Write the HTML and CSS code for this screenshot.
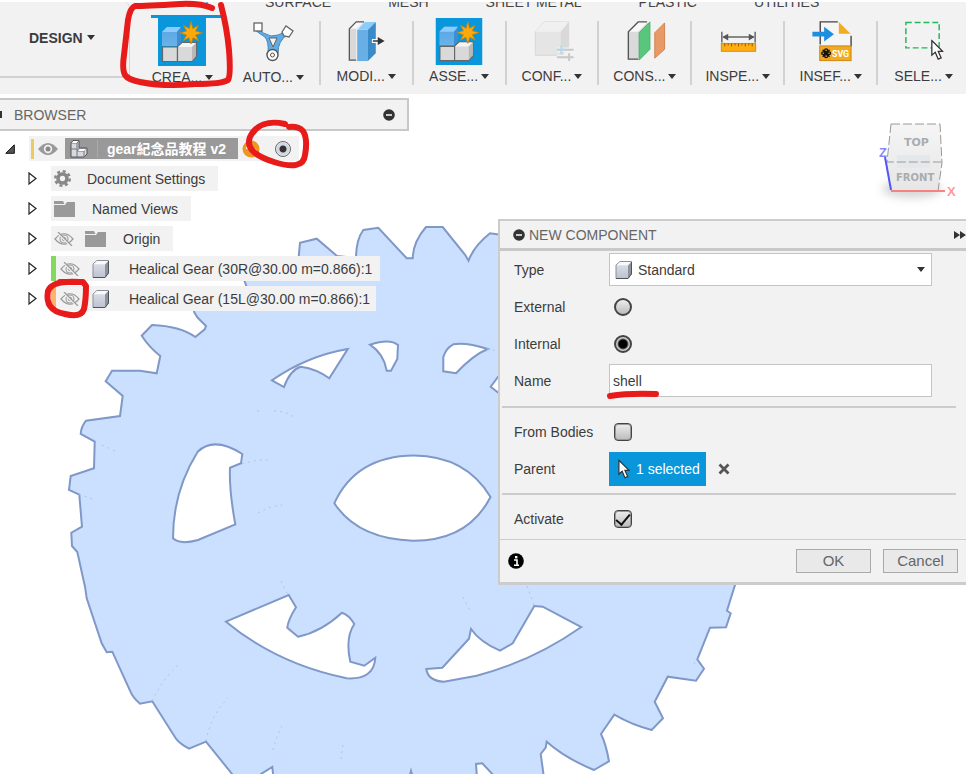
FILE: index.html
```html
<!DOCTYPE html>
<html lang="en">
<head>
<meta charset="utf-8">
<title>gear紀念品教程 v2</title>
<link rel="stylesheet" href="styles.css">
</head>
<body>
<svg class="defs" aria-hidden="true">
  <defs>
    <linearGradient id="boxFace" x1="0" y1="0" x2="0" y2="1"><stop offset="0" stop-color="#dfe3ec"/><stop offset="1" stop-color="#bcc2cf"/></linearGradient>
    <linearGradient id="blueFace" x1="0" y1="0" x2="0" y2="1"><stop offset="0" stop-color="#5aa5e2"/><stop offset="1" stop-color="#69b2ea"/></linearGradient>
    <linearGradient id="cubeFace" x1="0" y1="0" x2="0" y2="1"><stop offset="0" stop-color="#f5f5f5"/><stop offset="1" stop-color="#e6e6e6"/></linearGradient>
    <filter id="soft" x="-50%" y="-50%" width="200%" height="200%"><feGaussianBlur stdDeviation="4"/></filter>
    <symbol id="assemble" viewBox="0 0 48 48">
      <rect width="48" height="48" fill="#0a96da"/>
      <path d="M4 14L9 9H23L19 14V28H4Z" fill="url(#blueFace)"/>
      <path d="M4 14L9 9H23L19 14Z" fill="#8ccbff"/>
      <path d="M19 14L23 9V25L19 28Z" fill="#3f8ed0"/>
      <path d="M4.500 29H19.500V43.500H4.500Z" fill="#d9d9d9" stroke="#666" stroke-width="1.200"/>
      <path d="M19.500 29L24 24.500H38.500V38L34 43.500H19.500Z" fill="#d9d9d9" stroke="#666" stroke-width="1.200"/>
      <path d="M20 29L24.500 25H38L34 29Z" fill="#f5f5f5"/>
      <path d="M34 29L38 25V38L34 43Z" fill="#b8b8b8"/>
      <path d="M33 3.500L34.800 10.500L40.500 7.500L37.500 13L44.500 15L37.500 17L40.500 22.500L35 19.700L33 26L31 19.700L25.500 22.500L28.500 17L22 15L28.500 13L25.500 7.500L31.300 10.500Z" fill="#ffa80a" stroke="#c98200" stroke-width=".8"/>
    </symbol>
    <symbol id="box" viewBox="0 0 20 20">
      <path d="M2 5L6 1.500H17.500V14L14 18.500H2Z" fill="url(#boxFace)" stroke="#8a8f99"/>
      <path d="M2.500 5.200L6 2H17L14 5.200Z" fill="#f8fafc"/>
      <path d="M14 5.500L17.500 2V14L14 18.500Z" fill="#8d929c"/>
      <path d="M17.500 2V14L14 18.500H2" fill="none" stroke="#4f535a"/>
    </symbol>
    <symbol id="folder" viewBox="0 0 21 16">
      <path d="M0 0H9L10.500 3H0Z" fill="#999"/>
      <path d="M0 4H11L13 1H21V16H0Z" fill="#999"/>
    </symbol>
    <symbol id="hidden-eye" viewBox="0 0 20 14">
      <path d="M1 7Q10-3.500 19 7Q10 17.500 1 7Z" fill="none" stroke="#999" stroke-width="1.200"/>
      <circle cx="10" cy="7" r="4" fill="none" stroke="#999" stroke-width="1.100"/>
      <circle cx="10" cy="7" r="1.800" fill="none" stroke="#999"/>
      <path d="M3 0L17 14" stroke="#f2f2f2" stroke-width="2"/>
      <path d="M4 0L18 14" stroke="#999" stroke-width="1.200"/>
    </symbol>
    <symbol id="twisty" viewBox="0 0 9 13"><path d="M1 1L8 6.500L1 12Z" fill="#fff" stroke="#222" stroke-width="1.200"/></symbol>
    <symbol id="minus" viewBox="0 0 12 12"><circle cx="6" cy="6" r="5.800" fill="#333"/><path d="M3 6H9" stroke="#ddd" stroke-width="1.800"/></symbol>
    <symbol id="pointer" viewBox="0 0 13 21"><path d="M1 1V16L4.500 13L7.500 20L10.500 18.700L7.500 12H12Z" fill="#fff" stroke="#333" stroke-width="1.300"/></symbol>
  </defs>
</svg>

<div class="app">
  <svg class="canvas" aria-label="Gear body">
    <path class="body-face" d="M194 300L240 298L246.700 287L244.500 281L246 270L298.700 262V257L300 242.700L316.700 238.700L337 256L356 258Q356 240 363.300 230L378.300 227.700L406.700 258.300H412.700Q413 242 426 227H442.700L465.300 255L468.500 260.700Q474 246 490 233.300L510 236L742 560L735 585L727 610.700L730.700 613.300L726 627.300L710 627.700L697.300 659.300L704 668.700L696 680.700L667.700 676.700L654.700 701.700L663 718.300L651.700 730Q632 725 614.300 714.700L601 734Q606 744 609 761.300L594 770Q565 758 546.700 741.700L545.700 747.700L540.700 754L544 778H496L482.300 763.300L476 764L477 778H413L411 771L409 778H276L273 774L272.300 767L261 774L256 782H238L231.700 773.500L206 741.700L189 748.700Q180 744 176 738.700L152.300 701.300L140 703.700Q133 698 130 690.700L112.300 651.700L106.700 652.300L101.700 643.300L86.700 598.300L85 586.700L77.300 552L72 546L71.300 532.700L82 526.700L79.300 494.700L69 490L70.700 476L94 468.300L94.700 441.700L80.700 434Q81 427 86 420.700L120 416L122.700 396L105.700 381.300L112 370.700H140L156.700 373.300L160.300 356Q149 347 141.700 335.700L152 325Q180 326 195.300 337L204.700 329.300L206 326L197.300 317.300L194 311.700L194 300Z"/>
    <g class="body-hole">
      <path d="M272 380.300Q307 356 347.700 349L329.300 378.300Q317 369 300.700 366.700Q290 370 284 387Z"/>
      <path d="M370 344.700Q390 338 398 345L397.300 359L391 370.700H386.700Q384 354 370 344.700Z"/>
      <path d="M443.300 371.300V357Q446 348 453.300 344.300Q466 342 487.700 349Q473 355 456 373.300Z"/>
      <path d="M506 370L498 377L490.700 386.700L498.300 392.700L508 398Z"/>
      <path d="M173 538.300C173 510 180 480 197.700 451.700Q214 436 242.300 454L241 463.300L230 467.700Q229 490 235.300 524.300L198 540Q180 545 173 538.300Z"/>
      <path d="M334.300 503.300Q356 456 414 455.500Q466 456 490.500 497Q468 541 413 540.700Q358 539 334.300 503.300Z"/>
      <path d="M226 621.700L288.700 595L296 607.300Q288 620 287.300 627.700L298 636.700Q321 632 342 612.700Q349 615 354.300 624Q345 638 350.300 661.700L364.300 665.700L375.300 657.700Q374 680 346.700 678.300Q277 664 226 621.700Z"/>
      <path d="M426.300 669L442.300 667.700L469 638.700L471 629Q480 642 500 650.700L512.700 643.300L534.300 606L542.700 606.700L581.300 627Q533 661 476.700 675.700L444 681.700Q428 681 426.300 669Z"/>
    </g>
    <g class="hidden-edges">
      <path d="M152 701Q162 680 178 665M206 741Q211 715 228 698M273 750Q276 737 282 726M341 759L343 745M257 411H263M274 411Q286 411 295 418M242 464Q257 459 270 460M258 513Q270 506 283 505M463 597L471 613M527 586L534 605M79 494L95 500M102 445L115 451M487 349L500 351M281 581L288 595M694 664L697 658"/>
    </g>
  </svg>

  <header class="toolbar">
    <div class="workspace">
      <button class="workspace-button" type="button">DESIGN <span class="caret"></span></button>
    </div>
    <div class="ribbon">
      <nav class="tabs" aria-label="Toolbar tabs">
        <a class="tab active" href="#">SOLID</a><a class="tab" href="#">SURFACE</a><a class="tab" href="#">MESH</a><a class="tab" href="#">SHEET METAL</a><a class="tab" href="#">PLASTIC</a><a class="tab" href="#">UTILITIES</a>
      </nav>
      <div class="tools">
        <button class="tool" type="button"><svg viewBox="0 0 48 48"><use href="#assemble"/></svg><span class="tool-name">CREA...<i class="caret"></i></span></button>
        <button class="tool" type="button"><svg viewBox="0 0 48 48">
          <path d="M8 10Q14 16 22 18Q29 18 36 14L38 17Q29 23 29 35H19Q20 24 16 19Q11 16 6 12Z" fill="#63abe3" stroke="#4288bd"/>
          <path d="M20 20H28L24 29Z" fill="#f2f2f2" stroke="#58656e"/>
          <rect x="5" y="5" width="8" height="8" fill="#fff" stroke="#666" stroke-width="1.300"/>
          <path d="M33 14L37 8L44 13L40 19L35 18Z" fill="#fff" stroke="#666" stroke-width="1.300"/>
          <circle cx="23.500" cy="37" r="5.500" fill="#fff" stroke="#555" stroke-width="1.400"/><circle cx="23.500" cy="37" r="2" fill="none" stroke="#555"/></svg><span class="tool-name">AUTO...<i class="caret"></i></span></button>
        <button class="tool" type="button"><svg viewBox="0 0 48 48">
          <path d="M7 11L14 4H23L14 11V43H7Z" fill="#d9d9d9"/><path d="M7 11L14 4H22L14 11Z" fill="#f7f7f7"/><path d="M14 43H7V11L14 4H22" fill="none" stroke="#555" stroke-width="1.300"/>
          <path d="M15 12H26V44H15Z" fill="#68afe5"/><path d="M15 12L23 4H34L26 12Z" fill="#8cccfa"/><path d="M26 12L34 4V36L26 44Z" fill="#398cc8"/>
          <path d="M30 23.500H39" stroke="#fff" stroke-width="4"/><path d="M31 23.500H41" stroke="#333" stroke-width="1.500"/><path d="M36 19.500L43 23.500L36 27.500Z" fill="#333"/></svg><span class="tool-name">MODI...<i class="caret"></i></span></button>
        <button class="tool" type="button"><svg viewBox="0 0 48 48"><use href="#assemble"/></svg><span class="tool-name">ASSE...<i class="caret"></i></span></button>
        <button class="tool" type="button"><svg viewBox="0 0 48 48">
          <path d="M7 14L16 4H41V30L34 38H7Z" fill="#e5e5e5" stroke="#d6d6d6"/><path d="M7 14L16 4H41L33 14Z" fill="#f0f0f0"/><path d="M33 14L41 4V29L33 38Z" fill="#d9d9d9"/>
          <path d="M29 32.500H46M29 40H46" stroke="#f2f2f2" stroke-width="5"/><path d="M29 32.500H46M29 40H46M41.500 36V44" stroke="#c8c8c8" stroke-width="2"/><path d="M33.500 28V37M29 32.500H38" stroke="#b6d9ed" stroke-width="2"/></svg><span class="tool-name">CONF...<i class="caret"></i></span></button>
        <button class="tool" type="button"><svg viewBox="0 0 48 48">
          <path d="M7 14L17 4H27V34L17 43H7Z" fill="#dadada"/><path d="M7 14L17 4H27L17 14Z" fill="#f8f8f8"/><path d="M17 42H7V14L17 4H26" fill="none" stroke="#555" stroke-width="1.400"/>
          <path d="M18 15L29 4V32L18 43Z" fill="#58c67c" stroke="#4aaf6c"/><path d="M34 15L44 5V32L34 41Z" fill="#e79a67" stroke="#d28351"/></svg><span class="tool-name">CONS...<i class="caret"></i></span></button>
        <button class="tool" type="button"><svg viewBox="0 0 48 48">
          <path d="M7.500 14V25M41.500 14V25M9 19.500H40" stroke="#666" stroke-width="1.500"/><path d="M8 19.500L14 16V23ZM41 19.500L35 16V23Z" fill="#555"/>
          <rect x="7" y="26" width="35" height="8" fill="#ffad12" stroke="#db8b0b"/><path d="M10.500 26V29M14 26V28M17.500 26V29M21 26V28M24.500 26V29M28 26V28M31.500 26V29M35 26V28M38.500 26V29" stroke="#885900"/></svg><span class="tool-name">INSPE...<i class="caret"></i></span></button>
        <button class="tool" type="button"><svg viewBox="0 0 48 48">
          <path d="M13 29V4H32L44 16V29Z" fill="#f5f5f5"/><path d="M13 27V4H31M44.500 18V29" fill="none" stroke="#444" stroke-width="1.400"/><path d="M32 4V16H44Z" fill="#efad24"/>
          <path d="M5 14H17V9L27 16.500L17 24V19H5Z" fill="#1c90df"/>
          <rect x="12.500" y="28.500" width="32" height="15" fill="#f1ab22" stroke="#ce8610"/>
          <g fill="none" stroke="#111" stroke-width="1.300"><circle cx="19" cy="33" r="1.500"/><circle cx="19" cy="39" r="1.500"/><circle cx="16" cy="36" r="1.500"/><circle cx="22" cy="36" r="1.500"/><path d="M15.500 32.500L22.500 39.500M22.500 32.500L15.500 39.500"/></g>
          <text x="25" y="40" class="svg-label">SVG</text></svg><span class="tool-name">INSEF...<i class="caret"></i></span></button>
        <button class="tool" type="button"><svg viewBox="0 0 48 48">
          <rect x="5.500" y="4.500" width="34" height="26" fill="none" stroke="#25b55b" stroke-width="1.500" stroke-dasharray="6 3"/>
          <use href="#pointer" x="31" y="22" width="13" height="21"/></svg><span class="tool-name">SELE...<i class="caret"></i></span></button>
      </div>
    </div>
  </header>

  <main class="workspace-area">
    <section class="browser" aria-label="Browser">
      <div class="browser-head"><i class="grip"></i><h2>BROWSER</h2><svg class="minus"><use href="#minus"/></svg></div>
      <ul class="tree">
        <li class="row root">
          <svg class="open-twisty" viewBox="0 0 10 10"><path d="M9.300 .8V9.300H.8Z" fill="#555" stroke="#111"/></svg>
          <div class="cell">
            <i class="mark yellow"></i>
            <svg class="eye" viewBox="0 0 20 14"><path d="M0 7Q10-5 20 7Q10 19 0 7Z" fill="#999"/><circle cx="10" cy="7" r="4.200" fill="#f2f2f2"/><circle cx="10" cy="7" r="2.500" fill="#888"/></svg>
            <span class="selected">
              <svg class="root-icon" viewBox="0 0 20 20"><path d="M2 4L4 1.500H10V9H18L18 15L15 18H2Z" fill="#d5d9e2" stroke="#555"/><path d="M2 10H8V18M8 12L10.500 9H18L15 12H8M15 12V18M2 4H8L10 2M8 4V10" fill="none" stroke="#777"/><path d="M3 4L4.500 2H9L7.500 4ZM9 12L11 10H17L15 12Z" fill="#fff"/></svg>
              <b>gear紀念品教程 v2</b>
            </span>
            <svg class="sync" viewBox="0 0 18 18"><circle cx="9" cy="9" r="8.500" fill="#ee9620"/><path d="M5 9Q5 5 9 5M9 12H16M13 9L16 15" fill="none" stroke="#fff" stroke-width="1.800"/><path d="M12 15Q15 11 17 16" fill="none" stroke="#333" stroke-width="1.500"/></svg>
            <input class="activate-dot" type="radio" name="active-component" aria-label="Activate component" checked>
          </div>
        </li>
        <li class="row"><svg class="twisty"><use href="#twisty"/></svg><div class="cell"><svg class="gear" viewBox="0 0 16 16"><circle cx="8" cy="8" r="6.800" fill="none" stroke="#888" stroke-width="2.400" stroke-dasharray="2.800 2.540"/><circle cx="8" cy="8" r="4.200" fill="none" stroke="#888" stroke-width="3.400"/></svg><span class="after-gear">Document Settings</span></div></li>
        <li class="row"><svg class="twisty"><use href="#twisty"/></svg><div class="cell"><svg class="folder"><use href="#folder"/></svg><span class="after-folder">Named Views</span></div></li>
        <li class="row"><svg class="twisty"><use href="#twisty"/></svg><div class="cell"><svg class="eye"><use href="#hidden-eye"/></svg><svg class="folder second"><use href="#folder"/></svg><span class="after-folder">Origin</span></div></li>
        <li class="row"><svg class="twisty"><use href="#twisty"/></svg><div class="cell component"><i class="mark green"></i><svg class="eye"><use href="#hidden-eye"/></svg><svg class="box"><use href="#box"/></svg><span class="after-box">Healical Gear (30R@30.00 m=0.866):1</span></div></li>
        <li class="row"><svg class="twisty"><use href="#twisty"/></svg><div class="cell component"><i class="mark orange"></i><svg class="eye"><use href="#hidden-eye"/></svg><svg class="box"><use href="#box"/></svg><span class="after-box">Healical Gear (15L@30.00 m=0.866):1</span></div></li>
      </ul>
    </section>

    <form class="dialog" aria-label="New component">
      <div class="dialog-head"><svg class="minus"><use href="#minus"/></svg><h2>NEW COMPONENT</h2><svg class="forward" viewBox="0 0 12 8"><path d="M0 0L6 4L0 8ZM6 0L12 4L6 8Z" fill="#333"/></svg></div>
      <div class="section first">
        <div class="field"><label for="type">Type</label><span class="select-wrap"><svg class="box"><use href="#box"/></svg><select id="type"><option>Standard</option></select><i class="caret"></i></span></div>
        <div class="field"><label for="external">External</label><input id="external" type="radio" name="place"></div>
        <div class="field"><label for="internal">Internal</label><input id="internal" type="radio" name="place" checked></div>
        <div class="field"><label for="name">Name</label><input id="name" type="text" value="shell"></div>
      </div>
      <div class="section">
        <div class="field"><label for="bodies">From Bodies</label><input id="bodies" type="checkbox"></div>
        <div class="field"><label for="parent">Parent</label><button id="parent" class="picker" type="button"><svg viewBox="0 0 13 21"><use href="#pointer"/></svg>1 selected</button><button class="clear" type="button" aria-label="Clear selection"><svg viewBox="0 0 12 12"><path d="M1.500 1.500L10.500 10.500M10.500 1.500L1.500 10.500" stroke="#555" stroke-width="2.800"/></svg></button></div>
      </div>
      <div class="section last">
        <div class="field"><label for="activate">Activate</label><input id="activate" type="checkbox" checked></div>
      </div>
      <div class="dialog-foot">
        <svg class="info" viewBox="0 0 16 16"><circle cx="8" cy="8" r="7.800" fill="#000"/><path d="M6 7H9V12M6 12.300H11" fill="none" stroke="#fff" stroke-width="1.600"/><rect x="7" y="3" width="2.400" height="2.400" fill="#fff"/></svg>
        <button type="button">OK</button><button type="button">Cancel</button>
      </div>
    </form>
  </main>

  <svg class="view-cube" viewBox="870 110 96 100" aria-label="View cube">
    <ellipse cx="912" cy="189" rx="30" ry="9" fill="#bbb" opacity=".6" filter="url(#soft)"/>
    <path d="M891 124L940 124L942 163L938 191H890L887 162Z" fill="url(#cubeFace)"/>
    <path d="M897 155H930V168H897Z" fill="#e5e8ea"/>
    <path d="M891 124L940 124L942 163L938 191M891 124L887 162H942" fill="none" stroke="#999" stroke-dasharray="9 3"/>
    <text x="904" y="146" class="cube-text">TOP</text>
    <text x="896" y="181" class="cube-text front">FRONT</text>
    <path d="M885 157L891 190" stroke="#5555f5" stroke-width="2"/><path d="M891 191H945" stroke="#f78282" stroke-width="2"/>
    <text x="879" y="157" class="axis z">Z</text><text x="947" y="196" class="axis x">X</text>
  </svg>

  <svg class="markup" aria-hidden="true">
    <path d="M212 8Q200 3 180 4Q145 6 135 6Q130 8 128 20L124 55C121 76 125 79 140 82Q165 87 195 84Q222 84 228 80Q231 76 229 50Q227 28 221 5"/>
    <path d="M285 124C268 120 256 125 250 137C245 150 259 157 274 162C293 168 304 166 305 155Q308 139 303 131Q298 126 289 127"/>
    <path d="M80 282Q52 280 48 291C46 302 49 311 65 314Q81 318 84 309Q86 300 86 286L83 282L60 282"/>
    <path d="M610 396Q628 393 656 394"/>
  </svg>
</div>
</body>
</html>
```
FILE: styles.css
```css
* { box-sizing: border-box; }
body { margin: 0; background: #fff; color: #3c3c3c; font: 14px/18px "Liberation Sans", "Noto Sans CJK TC", Arial, sans-serif; }
button, input, select { font: inherit; color: inherit; margin: 0; }
h2 { margin: 0; font-size: 14px; font-weight: 400; color: #666; }
.defs { position: absolute; width: 0; height: 0; }
.app { position: relative; min-height: 100vh; overflow: hidden; }
.canvas, .markup { position: absolute; top: 0; left: 0; width: 100%; height: 100%; }
.markup { pointer-events: none; fill: none; stroke: #e81b1b; stroke-width: 6; stroke-linecap: round; stroke-linejoin: round; }
.body-face { fill: #cbdfff; stroke: #7f98c8; stroke-width: 2; }
.body-hole { fill: #fff; stroke: #7f98c8; stroke-width: 2; }
.hidden-edges { fill: none; stroke: #b2c3e0; stroke-width: 1; stroke-dasharray: 2 4; }
.caret { display: inline-block; flex: none; border: 4px solid transparent; border-top: 5px solid #333; border-bottom: 0; }

.toolbar { position: relative; display: flex; height: 94px; border-top: 2px solid #fff; background: #f2f2f2; }
.workspace { flex: none; width: 130px; height: 76px; border: 2px solid #d2d2d2; border-width: 0 1px 2px 0; border-top-right-radius: 6px; display: flex; align-items: center; }
.workspace-button { border: 0; background: none; padding: 0 0 3px 29px; font-weight: 700; display: flex; align-items: center; gap: 4px; }
.ribbon { flex: 1; min-width: 0; padding-left: 7px; margin-right: -3px; }
.tabs { display: flex; height: 16px; padding-left: 14px; gap: 27px; overflow: hidden; align-items: flex-end; }
.tab { color: #444; text-decoration: none; white-space: nowrap; padding: 0 15px 4px; line-height: 18px; border-bottom: 3px solid transparent; }
.tab.active { color: #0a96da; border-color: #0a96da; }
.tools { display: flex; }
.tool { position: relative; flex: 1; min-width: 0; padding: 0; border: 0; background: none; display: flex; flex-direction: column; align-items: center; gap: 2px; }
.tool svg { width: 48px; height: 48px; }
.tool + .tool + .tool { border-left: 2px solid #d2d2d2; height: 64px; margin-top: 3px; }
.tool + .tool + .tool svg { margin-top: -3px; }
.tool-name { display: flex; align-items: center; gap: 3px; white-space: nowrap; }
.svg-label { font: 700 9px Roboto, sans-serif; fill: #fff; }

.workspace-area { position: relative; display: flex; justify-content: space-between; align-items: flex-start; }
.browser { width: 409px; padding-top: 4px; }
.browser-head { display: flex; align-items: center; height: 33px; border: 2px solid #c8c8c8; border-width: 2px 2px 2px 0; background: #f2f2f2; padding-right: 12px; }
.browser-head h2 { flex: 1; }
.grip { width: 2px; height: 7px; margin-right: 12px; background: #333; }
.minus { width: 12px; height: 12px; }
.tree { list-style: none; margin: 0; padding: 5px 0 0; display: flex; flex-direction: column; gap: 5px; }
.row { display: flex; align-items: center; height: 25px; padding-left: 28px; }
.row.root { padding-left: 5px; }
.open-twisty { width: 10px; height: 10px; margin-right: 14px; }
.twisty { width: 9px; height: 13px; margin-right: 14px; }
.cell { display: flex; align-items: center; height: 25px; padding: 0 13px 0 3px; background: #f2f2f2; white-space: nowrap; }
.root .cell { padding: 0 8px 0 2px; }
.component { padding: 0 8px 0 0; }
.row:last-child .component { padding-right: 6px; }
.mark { width: 5px; height: 25px; margin-right: 4px; }
.yellow { width: 3px; height: 20px; background: #edcb5c; }
.green { background: #82da5c; }
.orange { background: #ffb469; }
.eye { width: 20px; height: 14px; }
.selected { display: flex; align-items: center; height: 21px; margin-left: 7px; padding: 0 12px 0 4px; background: #999; color: #fff; }
.selected b { border-left: 1px solid #aaa; padding-left: 9px; margin-left: 8px; }
.root-icon { width: 20px; height: 20px; }
.sync { width: 18px; height: 18px; margin: 0 15px 0 4px; }
.activate-dot { appearance: none; width: 16px; height: 16px; border: 1px solid #666; border-radius: 50%; background: radial-gradient(circle, #333 0 3px, #d4d8e2 4px 6px, #f4f4f4 7px); }
.gear { width: 17px; height: 17px; }
.folder { width: 21px; height: 16px; }
.folder.second { margin-left: 11px; }
.box { width: 20px; height: 20px; }
.cell .box { margin-left: 11px; }
.after-gear { margin-left: 16px; }
.after-folder { margin-left: 17px; }
.after-box { margin-left: 18px; }

.dialog { width: 468px; margin-top: 125px; border: 2px solid #ccc; border-right: 0; border-bottom-width: 3px; background: #f2f2f2; }
.dialog-head { display: flex; align-items: center; gap: 4px; height: 30px; padding: 0 0 0 13px; border-bottom: 3px solid #c8c8c8; }
.dialog-head h2 { flex: 1; }
.forward { width: 12px; height: 8px; }
.section { margin: 0 10px 0 2px; padding: 5px 0 6px 12px; border-bottom: 2px solid #ccc; }
.section.first { padding: 0 0 7px 12px; }
.section.last { padding-bottom: 2px; border-bottom: 0; }
.field { display: grid; grid-template-columns: 95px auto 1fr; align-items: center; height: 37px; }
.field input[type="text"], .select-wrap { grid-column: 2 / 4; margin-right: 24px; height: 33px; border: 1px solid #c4c4c4; background: #fff; }
.field input[type="text"] { min-width: 0; padding: 0 3px; outline: 0; }
.select-wrap { position: relative; display: flex; align-items: center; }
.select-wrap .box { position: absolute; left: 4px; pointer-events: none; }
.select-wrap .caret { position: absolute; right: 6px; pointer-events: none; }
.select-wrap select { appearance: none; width: 100%; height: 100%; border: 0; background: transparent; padding: 0 20px 0 28px; outline: 0; }
.field input[type="radio"], .field input[type="checkbox"] { appearance: none; width: 18px; height: 18px; margin-left: 5px; border: 2px solid #444; border-radius: 50%; background: linear-gradient(#eee, #bbb); }
.field input[type="checkbox"] { border-width: 1px; border-radius: 4px; box-shadow: inset 0 0 0 1px #999; display: flex; justify-content: center; align-items: flex-start; }
.field input[type="radio"]:checked { background: radial-gradient(circle, #000 0 4px, #ccc 6px); }
.field input[type="checkbox"]:checked::before { content: ""; width: 6px; height: 12px; border: solid #111; border-width: 0 2px 2px 0; transform: rotate(40deg); }
.picker { display: flex; align-items: center; gap: 6px; height: 34px; padding: 0 6px 0 9px; border: 0; background: #0a96da; color: #fff; white-space: nowrap; }
.picker svg { width: 12px; height: 20px; }
.clear { justify-self: start; display: flex; padding: 0; margin-left: 12px; border: 0; background: none; }
.clear svg { width: 12px; height: 12px; }
.dialog-foot { display: flex; align-items: center; gap: 12px; height: 43px; padding: 0 8px 0 8px; border-top: 1px solid #ccc; }
.info { width: 16px; height: 16px; margin-right: auto; }
.dialog-foot button { width: 75px; height: 24px; padding: 0; border: 1px solid #aaa; background: #e9e9e9; color: #666; font-size: 15px; line-height: 18px; }

.view-cube { position: absolute; top: 110px; right: 0; width: 96px; height: 100px; }
.cube-text { font: 700 11px "DejaVu Sans", sans-serif; fill: #a8acb0; }
.cube-text.front { font-size: 10px; }
.axis { font: 700 13px "Liberation Sans", sans-serif; }
.axis.z { fill: #8888f8; }
.axis.x { fill: #f99; }
```
